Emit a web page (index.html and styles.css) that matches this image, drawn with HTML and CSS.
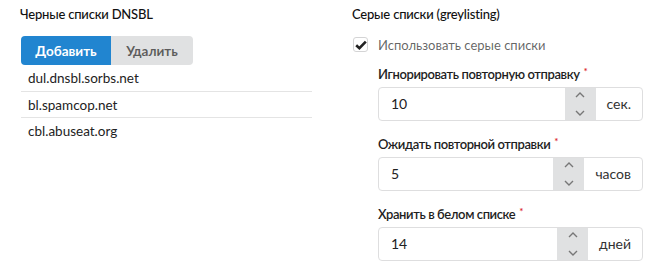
FILE: index.html
```html
<!DOCTYPE html>
<html lang="ru">

    <head>
        <meta charset="UTF-8">
        <meta name="viewport" content="width=device-width, initial-scale=1.0">
        <link rel="stylesheet" href="styles.css">
    </head>

    <body>
        <div class="page">
            <div class="column">
                <div class="heading">Черные списки DNSBL</div>
                <div class="buttons">
                    <button class="btn primary">Добавить</button>
                    <button class="btn">Удалить</button>
                </div>
                <div class="list">
                    <div class="item">dul.dnsbl.sorbs.net</div>
                    <div class="item">bl.spamcop.net</div>
                    <div class="item">cbl.abuseat.org</div>
                </div>
            </div>

            <div class="column">
                <div class="heading">Серые списки (greylisting)</div>
                <label class="checkbox">
                    <span class="box">
                        <svg width="12" height="10" viewBox="0 0 12 10">
                            <path d="M1.2 5.2 L4.4 8.2 L10.8 1.6" fill="none" stroke="#222" stroke-width="2.6"></path>
                        </svg>
                    </span>
                    Использовать серые списки
                </label>

                <div class="fields">
                    <div class="field">
                        <div class="label">Игнорировать повторную отправку<span class="req">*</span></div>
                        <div class="numInput">
                            <span class="value">10</span>
                            <div class="spin">
                                <svg width="10" height="26" viewBox="0 0 10 26">
                                    <path d="M1 6 L5 2 L9 6 M1 20 L5 24 L9 20" fill="none" stroke="#777" stroke-width="1.4"></path>
                                </svg>
                            </div>
                            <span class="unit">сек.</span>
                        </div>
                    </div>
                    <div class="field">
                        <div class="label">Ожидать повторной отправки<span class="req">*</span></div>
                        <div class="numInput">
                            <span class="value">5</span>
                            <div class="spin">
                                <svg width="10" height="26" viewBox="0 0 10 26">
                                    <path d="M1 6 L5 2 L9 6 M1 20 L5 24 L9 20" fill="none" stroke="#777" stroke-width="1.4"></path>
                                </svg>
                            </div>
                            <span class="unit">часов</span>
                        </div>
                    </div>
                    <div class="field">
                        <div class="label">Хранить в белом списке<span class="req">*</span></div>
                        <div class="numInput">
                            <span class="value">14</span>
                            <div class="spin">
                                <svg width="10" height="26" viewBox="0 0 10 26">
                                    <path d="M1 6 L5 2 L9 6 M1 20 L5 24 L9 20" fill="none" stroke="#777" stroke-width="1.4"></path>
                                </svg>
                            </div>
                            <span class="unit">дней</span>
                        </div>
                    </div>
                </div>
            </div>
        </div>
    </body>

</html>
```

FILE: styles.css
```css
* {
    box-sizing: border-box;
    font-family: "Lato", "Noto Sans", sans-serif;
}

body {
    margin: 0;
    background: white;
    color: #222;
    font-size: 13.5px;
}

.page {
    display: flex;
    gap: 40px;
    padding: 5px 13px 0 20px;
}

.column {
    width: 293px;
    display: flex;
    flex-direction: column;
}

.heading {
    font-size: 13px;
    font-weight: 500;
    letter-spacing: -0.2px;
    height: 18px;
    line-height: 18px;
    color: #111;
}

.buttons {
    display: flex;
    margin-top: 13px;
    padding-left: 1px;
}

.btn {
    height: 29px;
    border: none;
    outline: none;
    font-size: 13.5px;
    font-weight: bold;
    color: rgba(0, 0, 0, 0.6);
    background: #e0e1e2;
    width: 82px;
    border-radius: 0 4px 4px 0;
    padding: 0;
}

.btn.primary {
    width: 90px;
    color: white;
    background: #2185d0;
    border-radius: 4px 0 0 4px;
}

.list {
    display: flex;
    flex-direction: column;
    margin-left: 1px;
}

.item {
    height: 26.5px;
    line-height: 27px;
    padding-left: 7px;
    color: #222;
    border-bottom: 1px solid #e4e4e4;
}

.item:last-child {
    border-bottom: none;
}

.checkbox {
    display: flex;
    align-items: center;
    gap: 10px;
    margin-top: 14px;
    font-size: 13px;
    color: rgba(0, 0, 0, 0.62);
    height: 15px;
    padding-left: 1px;
}

.box {
    width: 15px;
    height: 15px;
    border: 1px solid #d4d4d5;
    border-radius: 3px;
    display: flex;
    align-items: center;
    justify-content: center;
}

.fields {
    display: flex;
    flex-direction: column;
    gap: 14px;
    padding-left: 26px;
    margin-top: 13px;
}

.label {
    font-size: 13px;
    font-weight: 600;
    letter-spacing: -0.4px;
    height: 18px;
    line-height: 18px;
    margin-bottom: 4px;
    color: #1e1e1e;
}

.req {
    color: #db2828;
    font-size: 10px;
    vertical-align: top;
    line-height: 12px;
    margin-left: 4px;
}

.numInput {
    display: flex;
    height: 34px;
    border: 1px solid #dededf;
    border-radius: 4px;
    width: 265px;
    overflow: hidden;
}

.value {
    flex: 1;
    line-height: 32px;
    padding-left: 12px;
    font-size: 14px;
    color: #222;
}

.spin {
    width: 31px;
    background: #e0e1e2;
    display: flex;
    align-items: center;
    justify-content: center;
}

.unit {
    line-height: 32px;
    padding: 0 11px;
    font-size: 14px;
    color: #333;
}
```
